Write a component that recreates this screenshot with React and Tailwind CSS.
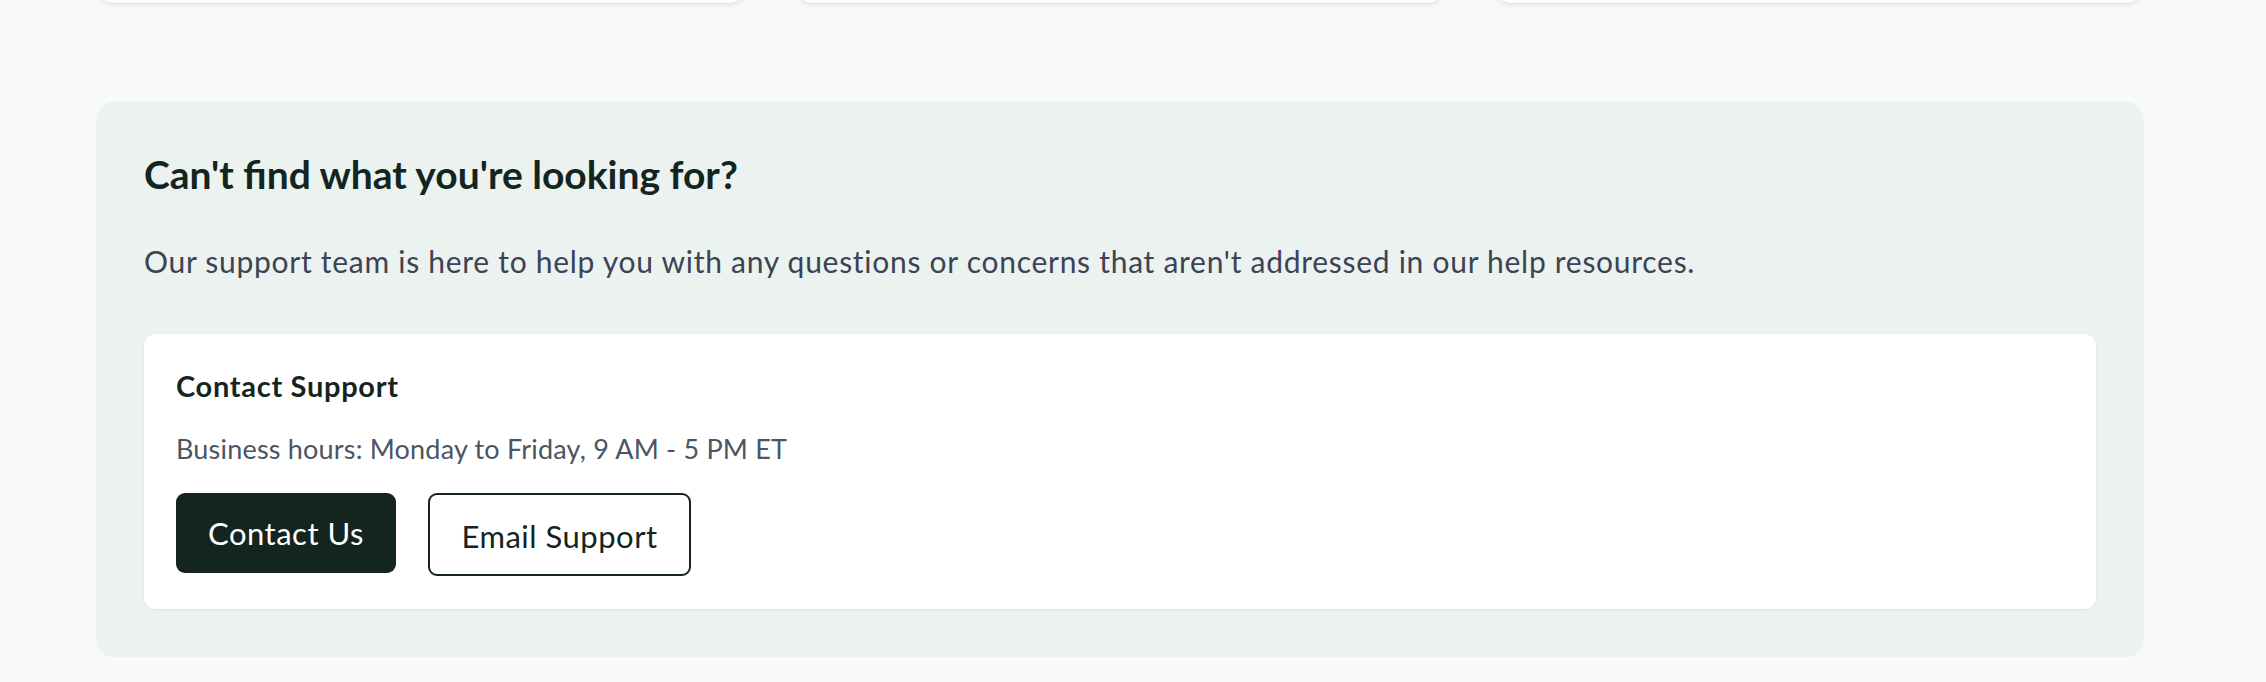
import React from 'react';

const cards = [1, 2, 3];

const App = () => {
  return (
    <div className="min-h-[682px] bg-[#f8f9fb] pl-[96px] pr-[122px] pb-[24px] overflow-hidden" style={{ fontFamily: 'Lato, "Noto Sans", sans-serif' }}>
      {/* cards row above, scrolled almost out of view */}
      <div className="grid grid-cols-3 gap-12 -mt-[196px]">
        {cards.map((c) => (
          <div key={c} className="h-[200px] bg-white rounded-[18px] border border-[#e3e5ea] shadow-[0_2px_4px_rgba(0,0,0,0.06)]" />
        ))}
      </div>

      <section className="mt-[98px] bg-[#ecf2ef] rounded-[18px] px-12 pt-12 pb-12">
        <h2 className="text-[39px] leading-[48px] font-bold text-[#13251f]">
          Can't find what you're looking for?
        </h2>
        <p className="mt-[41px] text-[30px] leading-[45px] text-[#3b4354] tracking-[0.72px]">
          Our support team is here to help you with any questions or concerns that aren't addressed in our help resources.
        </p>

        <div className="mt-[50px] bg-white rounded-[12px] shadow-[0_1px_3px_rgba(0,0,0,0.06)] px-8 pt-8 pb-[33px]">
          <h3 className="text-[29px] leading-[40px] font-bold text-[#13251f] tracking-[0.7px]">Contact Support</h3>
          <p className="mt-[23px] text-[27px] leading-[40px] text-[#4b5563] tracking-[0.2px]">
            Business hours: Monday to Friday, 9 AM - 5 PM ET
          </p>
          <div className="mt-[24px] flex items-start gap-8">
            <button className="h-[80px] w-[220px] flex items-center justify-center rounded-[9px] bg-[#14241e] text-white text-[31px] tracking-[0.5px]">
              Contact Us
            </button>
            <button className="h-[83px] w-[263px] flex items-center justify-center rounded-[9px] border-2 border-[#14241e] bg-white text-[#14241e] text-[31px] tracking-[0.5px] pt-[3px]">
              Email Support
            </button>
          </div>
        </div>
      </section>
    </div>
  );
};

export default App;
